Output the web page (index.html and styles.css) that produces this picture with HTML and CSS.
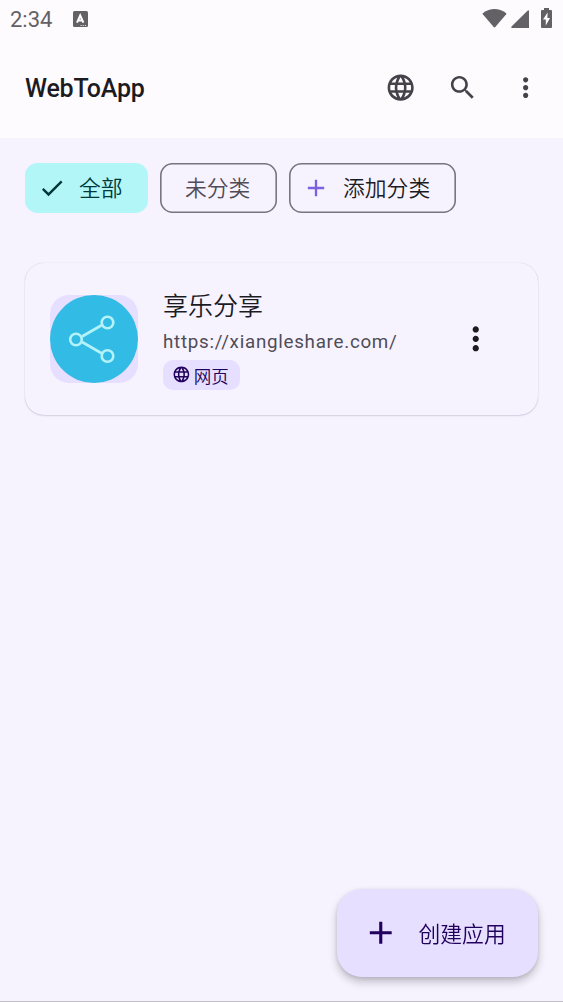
FILE: index.html
```
<!DOCTYPE html>
<html lang="zh">
<head>
  <meta charset="UTF-8" />
  <meta name="viewport" content="width=device-width, initial-scale=1.0" />
  <title>WebToApp</title>
  <link rel="stylesheet" href="styles.css">
</head>
<body>
  <div class="status-bar">
    <span class="clock">2:34</span>
    <svg class="ime" viewBox="0 0 15 16"><rect width="15" height="16" rx="1.5" fill="#636165"/><path d="M4 11.600L7.200 4.500l3.200 7.100M5.200 9.400h4" fill="none" stroke="#fff" stroke-width="2"/><path d="M7.500 14.500h6" stroke="#ddd" stroke-width="1.200" stroke-dasharray="1.200 1"/></svg>
    <div class="status-icons">
      <svg width="25" height="19" viewBox="0 0 25 19"><path d="M.8 4.200Q12.500-4.200 24.200 4.200q.4.5 0 1L13.300 18q-.8.8-1.600 0L.8 5.200q-.4-.5 0-1z"/></svg>
      <svg class="signal" width="18" height="18" viewBox="0 0 18 18"><path d="M18 .8V18H1Q-.2 17.700.5 16.500L16.500.8Q17.500-.2 18 .8z"/></svg>
      <svg class="battery" width="11" height="20" viewBox="0 0 11 20"><path d="M3 2V0h5v2h2q1 0 1 1v16q0 1-1 1H1q-1 0-1-1V3q0-1 1-1z"/><path d="M6.600 4.500L2 11.600h2.800V17.500L9 10H6.400z" fill="#fff"/></svg>
    </div>
  </div>

  <header>
    <h1>WebToApp</h1>
    <div class="actions">
      <svg class="icon" viewBox="0 0 24 24"><use href="#globe"/></svg>
      <svg class="icon" viewBox="0 0 24 24"><path d="M15.500 14h-.79l-.28-.27C15.410 12.590 16 11.110 16 9.500 16 5.910 13.090 3 9.500 3S3 5.910 3 9.500 5.910 16 9.500 16c1.610 0 3.090-.59 4.230-1.570l.27.28v.79l5 4.990L20.490 19l-4.990-5zm-6 0C7.010 14 5 11.990 5 9.500S7.010 5 9.500 5 14 7.010 14 9.500 11.990 14 9.500 14z"/></svg>
      <svg class="icon" viewBox="0 0 24 24"><use href="#more"/></svg>
    </div>
  </header>

  <main>
    <div class="chips">
      <button class="chip selected">
        <svg viewBox="0 0 24 24"><path d="M9 16.170L4.830 12l-1.420 1.410L9 19 21 7l-1.410-1.410z"/></svg>
        <span>全部</span>
      </button>
      <button class="chip plain"><span>未分类</span></button>
      <button class="chip add">
        <svg viewBox="0 0 24 24"><use href="#plus"/></svg>
        <span>添加分类</span>
      </button>
    </div>

    <div class="app-card">
      <div class="app-icon">
        <svg viewBox="0 0 88 88">
          <circle cx="44" cy="44" r="44" fill="#32bce5"/>
          <g fill="none" stroke="#b4f2fa" stroke-width="2.600">
            <path d="M32 41.500L52 30M32 47l20 11.500"/>
            <circle cx="26" cy="44.500" r="5.800"/>
            <circle cx="57.500" cy="27.500" r="5.800"/>
            <circle cx="57.500" cy="61" r="5.800"/>
          </g>
        </svg>
      </div>
      <div class="app-info">
        <h2>享乐分享</h2>
        <p>https://xiangleshare.com/</p>
        <div class="tag">
          <svg viewBox="0 0 24 24"><use href="#globe"/></svg>
          <span>网页</span>
        </div>
      </div>
      <svg class="card-more" viewBox="0 0 24 24"><use href="#more"/></svg>
    </div>
  </main>

  <button class="fab">
    <svg viewBox="0 0 24 24"><use href="#plus"/></svg>
    <span>创建应用</span>
  </button>

  <!-- shared icons -->
  <svg class="defs">
    <defs>
      <path id="globe" d="M11.990 2C6.470 2 2 6.480 2 12s4.470 10 9.990 10C17.520 22 22 17.520 22 12S17.520 2 11.990 2zm6.930 6h-2.950c-.32-1.250-.78-2.450-1.380-3.560 1.840.63 3.370 1.910 4.330 3.560zM12 4.040c.83 1.200 1.480 2.530 1.910 3.960h-3.820c.43-1.430 1.080-2.760 1.910-3.960zM4.260 14C4.100 13.360 4 12.690 4 12s.1-1.360.26-2h3.380c-.08.66-.14 1.320-.14 2s.06 1.340.14 2H4.260zm.82 2h2.950c.32 1.250.78 2.450 1.380 3.560-1.840-.63-3.370-1.900-4.330-3.560zm2.950-8H5.080c.96-1.660 2.490-2.930 4.330-3.560C8.810 5.550 8.350 6.750 8.030 8zM12 19.960c-.83-1.200-1.480-2.530-1.910-3.960h3.820c-.43 1.430-1.080 2.760-1.910 3.960zM14.340 14H9.660c-.09-.66-.16-1.320-.16-2s.07-1.350.16-2h4.680c.09.65.16 1.320.16 2s-.07 1.340-.16 2zm.25 5.560c.6-1.110 1.060-2.310 1.380-3.560h2.950c-.96 1.650-2.490 2.930-4.330 3.560zM16.360 14c.08-.66.14-1.320.14-2s-.06-1.340-.14-2h3.380c.16.640.26 1.310.26 2s-.1 1.360-.26 2h-3.380z"/>
      <path id="more" d="M12 8c1.100 0 2-.9 2-2s-.9-2-2-2-2 .9-2 2 .9 2 2 2zm0 2c-1.100 0-2 .9-2 2s.9 2 2 2 2-.9 2-2-.9-2-2-2zm0 6c-1.100 0-2 .9-2 2s.9 2 2 2 2-.9 2-2-.9-2-2-2z"/>
      <path id="plus" d="M19 13h-6v6h-2v-6H5v-2h6V5h2v6h6v2z"/>
    </defs>
  </svg>
</body>
</html>
```
FILE: styles.css
```
:root {
  --bg: #f6f3ff;
  --bar: #fefbff;
  --fg: #1c1b1f;
  --muted: #504c57;
  --outline: #79747e;
  --container: #e6dfff;
  --deep: #22005d;
}
* { box-sizing: border-box; }
body {
  margin: 0;
  height: 1002px;
  overflow: hidden;
  background: var(--bg);
  border-bottom: 1px solid #c4c1cb;
  color: var(--fg);
  font-family: Roboto, "Noto Sans CJK SC", sans-serif;
}
h1, h2, p { margin: 0; font-weight: 400; }
svg { display: block; flex: none; fill: currentColor; }
button {
  font: inherit;
  border: none;
  padding: 0;
  cursor: pointer;
}
.defs { display: none; }

.status-bar {
  display: flex;
  height: 38px;
  padding: 0 11px 0 10px;
  align-items: center;
  background: var(--bar);
  color: #636165;
}
.clock { width: 63px; font-size: 22px; line-height: 38px; padding-top: 2px; }
.ime { width: 15px; height: 16px; }
.status-icons { display: flex; align-items: flex-end; margin-left: auto; padding-bottom: 2px; }
.signal { margin-left: 4px; }
.battery { margin-left: 12px; }

header {
  display: flex;
  align-items: center;
  height: 100px;
  padding: 0 22px 0 25px;
  background: var(--bar);
}
h1 {
  padding-top: 2px;
  font-size: 25px;
  font-weight: 500;
  line-height: 36px;
  letter-spacing: -0.2px;
}
.actions {
  display: flex;
  gap: 31px;
  margin-left: auto;
  color: #45424a;
}
.icon { width: 31.3px; height: 31.3px; }

main { padding: 25px 25px 0; }
.chips { display: flex; gap: 12px; }
.chip {
  display: flex;
  align-items: center;
  height: 50px;
  border-radius: 12.5px;
  background: none;
  box-shadow: inset 0 0 0 1.6px var(--outline);
  color: var(--fg);
  font-size: 21.8px;
  line-height: 30px;
}
.chip span { padding-top: 1px; font-weight: 350; }
.chip svg { width: 28px; height: 28px; }
.chip.selected {
  width: 123px;
  padding-left: 13px;
  gap: 13px;
  box-shadow: none;
  background: #b2f6f7;
  color: #003738;
}
.chip.plain { width: 117px; padding-left: 25px; color: var(--muted); }
.chip.add { width: 167px; padding-left: 13px; gap: 13px; }
.chip.add svg { color: #7b61e0; }

.app-card {
  display: flex;
  align-items: center;
  height: 152px;
  margin-top: 50px;
  padding: 0 44px 0 25px;
  border-radius: 19px;
  background: var(--bg);
  box-shadow: 0 1px 1.5px rgba(60, 50, 80, 0.16), 0 0 1px rgba(60, 50, 80, 0.25);
}
.app-icon {
  width: 88px;
  height: 88px;
  border-radius: 19px;
  background: var(--container);
  overflow: hidden;
}
.app-info { flex: 1; margin-left: 25px; }
.app-info h2 { font-size: 25px; line-height: 35px; font-weight: 350; }
.app-info p {
  padding-top: 3px;
  color: var(--muted);
  font-size: 18.8px;
  line-height: 30px;
  letter-spacing: 0.72px;
}
.tag {
  display: flex;
  align-items: center;
  gap: 3px;
  width: 77px;
  height: 30px;
  margin-top: 3px;
  padding-left: 9px;
  border-radius: 10px;
  background: var(--container);
  color: var(--deep);
  font-size: 17.5px;
}
.tag span { padding-top: 1px; font-weight: 350; }
.tag svg { width: 18.8px; height: 18.8px; }
.card-more { width: 37.5px; height: 37.5px; }

.fab {
  position: fixed;
  right: 25px;
  bottom: 25px;
  display: flex;
  align-items: center;
  gap: 19px;
  width: 201px;
  height: 88px;
  padding-left: 25px;
  border-radius: 25px;
  background: var(--container);
  color: var(--deep);
  font-size: 21.8px;
  box-shadow: 0 5px 9px rgba(0, 0, 0, 0.22), 0 1px 4px rgba(0, 0, 0, 0.1);
}
.fab span { padding-bottom: 2px; font-weight: 350; }
.fab svg { width: 37.5px; height: 37.5px; }
```
